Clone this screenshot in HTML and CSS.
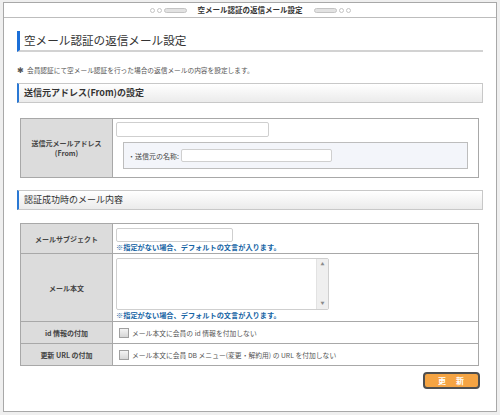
FILE: index.html
```html
<!DOCTYPE html>
<html lang="ja">
<head>
<meta charset="utf-8">
<title>空メール認証の返信メール設定</title>
<link rel="stylesheet" href="styles.css">
</head>
<body>
<div class="frame">
  <div class="topbar">
    <span class="dot"></span><span class="dot"></span><span class="pill"></span>
    <span class="topbar-title">空メール認証の返信メール設定</span>
    <span class="pill"></span><span class="dot"></span><span class="dot"></span>
  </div>
  <div class="content">
    <h1 class="page-title">空メール認証の返信メール設定</h1>
    <p class="note"><span class="note-mark">✱</span>会員認証にて空メール認証を行った場合の返信メールの内容を設定します。</p>

    <h2 class="section section-bold">送信元アドレス(From)の設定</h2>
    <table class="form form-from">
      <tr>
        <th>送信元メールアドレス<br>(From)</th>
        <td class="from-cell">
          <input class="input input-from" type="text">
          <div class="subbox"><span>・送信元の名称:</span><input class="input input-name" type="text"></div>
        </td>
      </tr>
    </table>

    <h2 class="section">認証成功時のメール内容</h2>
    <table class="form form-mail">
      <tr>
        <th>メールサブジェクト</th>
        <td class="text-cell">
          <input class="input input-subject" type="text">
          <div class="hint">※指定がない場合、デフォルトの文言が入ります。</div>
        </td>
      </tr>
      <tr>
        <th>メール本文</th>
        <td class="text-cell">
          <div class="textarea-box">
            <textarea class="textarea"></textarea>
            <div class="scrollbar"><span class="arrow">▲</span><span class="arrow">▼</span></div>
          </div>
          <div class="hint">※指定がない場合、デフォルトの文言が入ります。</div>
        </td>
      </tr>
      <tr class="check-row">
        <th>id 情報の付加</th>
        <td><label class="check"><input type="checkbox" class="checkbox"><span>メール本文に会員の id 情報を付加しない</span></label></td>
      </tr>
      <tr class="check-row">
        <th>更新 URL の付加</th>
        <td><label class="check"><input type="checkbox" class="checkbox"><span>メール本文に会員 DB メニュー(変更・解約用) の URL を付加しない</span></label></td>
      </tr>
    </table>

    <div class="actions">
      <button class="btn" type="button">更　新</button>
    </div>
  </div>
</div>
</body>
</html>
```

FILE: styles.css
```css
* { box-sizing: border-box; }
html, body { margin: 0; padding: 0; }
body {
  width: 500px;
  height: 415px;
  overflow: hidden;
  background: #efefef;
  font-family: "Noto Sans CJK JP", "Noto Sans", sans-serif;
  color: #333;
}
.frame {
  margin: 2px 3px 0;
  width: 494px;
  height: 410px;
  border: 1px solid #a8a8a8;
  background: #fff;
}
.topbar {
  height: 15px;
  border-bottom: 1px solid #bdbdbd;
  display: flex;
  align-items: center;
  justify-content: center;
}
.dot {
  width: 5px;
  height: 5px;
  border: 1px solid #c4c4c4;
  border-radius: 50%;
  margin: 0 1px;
}
.pill {
  width: 23px;
  height: 5px;
  border: 1px solid #c4c4c4;
  background: #e2e2e2;
  border-radius: 3px;
  margin: 0 1px;
}
.topbar-title {
  font-size: 7.5px;
  font-weight: bold;
  line-height: 1;
  margin: 0 10px;
  color: #333;
}
.content {
  padding: 13px 13px 0 13px;
}
.page-title {
  margin: 0;
  height: 21px;
  border-left: 3px solid #1b6fd8;
  border-bottom: 2px solid #d2d2d2;
  padding-left: 4px;
  font-size: 11.6px;
  font-weight: normal;
  line-height: 19px;
  color: #333;
}
.note {
  margin: 13px 0 0;
  font-size: 6.7px;
  line-height: 10px;
  color: #555;
  display: flex;
  align-items: center;
}
.note-mark {
  width: 10px;
  font-size: 8px;
  color: #555;
}
.section {
  margin: 8px 0 0;
  height: 20px;
  border: 1px solid #c8c8c8;
  border-left: 2px solid #2a78d4;
  background: linear-gradient(#ffffff, #ebebeb);
  padding-left: 5px;
  font-size: 9px;
  font-weight: normal;
  line-height: 18px;
  color: #333;
}
.section-bold { font-weight: bold; }
.form {
  margin: 15px 0 0 3px;
  width: 459px;
  border-collapse: collapse;
  border: 1px solid #999;
}
.form-from + .section { margin-top: 12px; }
.form-mail { margin-top: 13px; }
.form th {
  width: 92px;
  background: #dcdcdc;
  border: 1px solid #a8a8a8;
  font-size: 7px;
  font-weight: bold;
  line-height: 10px;
  color: #444;
  text-align: center;
  vertical-align: middle;
  padding: 0;
}
.form td {
  border: 1px solid #a8a8a8;
  padding: 0 0 0 3px;
  vertical-align: top;
  background: #fff;
}
.from-cell { padding: 3px 10px 8px 3px !important; }
.input {
  display: block;
  border: 1px solid #cfcfcf;
  border-radius: 2px;
  background: #fff;
  padding: 0;
  margin: 0;
}
.input-from { width: 153px; height: 15px; }
.subbox {
  margin: 5px 0 0 7px;
  width: 345px;
  height: 27px;
  border: 1px solid #bdbdbd;
  background: #f3f5fa;
  display: flex;
  align-items: center;
  padding-left: 4px;
  font-size: 7px;
  color: #444;
}
.input-name { width: 151px; height: 13px; margin-left: 2px; }
.text-cell { padding: 4px 0 1px 3px !important; }
.input-subject { width: 117px; height: 14px; }
.hint {
  margin-top: 1px;
  font-size: 7.2px;
  font-weight: bold;
  line-height: 9px;
  color: #1765a5;
}
.textarea-box {
  width: 213px;
  height: 52px;
  border: 1px solid #cfcfcf;
  border-radius: 2px;
  display: flex;
  background: #fff;
}
.textarea {
  flex: 1;
  border: none;
  resize: none;
  margin: 0;
  padding: 0;
  background: transparent;
  outline: none;
}
.scrollbar {
  width: 12px;
  background: #efefef;
  border-left: 1px solid #e2e2e2;
  display: flex;
  flex-direction: column;
  justify-content: space-between;
  align-items: center;
  padding: 3px 0;
}
.arrow {
  font-size: 4px;
  line-height: 5px;
  color: #8a8a8a;
}
.check-row th, .check-row td { height: 22px; vertical-align: middle; }
.check-row td { padding-left: 6px; }
.check {
  display: flex;
  align-items: center;
  font-size: 6.8px;
  color: #555;
}
.checkbox {
  appearance: none;
  -webkit-appearance: none;
  width: 10px;
  height: 10px;
  margin: 0 3px 0 0;
  border: 1px solid #a0a0a0;
  background: linear-gradient(#f4f4f4, #d6d6d6);
}
.actions {
  display: flex;
  justify-content: flex-end;
  margin: 6px 3px 0 0;
}
.btn {
  width: 57px;
  height: 17px;
  border: 2px solid #4f4f4f;
  border-radius: 4px;
  background: #f5a443;
  color: #fff;
  font-family: "Noto Sans CJK JP", sans-serif;
  font-size: 8px;
  font-weight: bold;
  line-height: 1;
  padding: 0;
  letter-spacing: 1px;
}
```
